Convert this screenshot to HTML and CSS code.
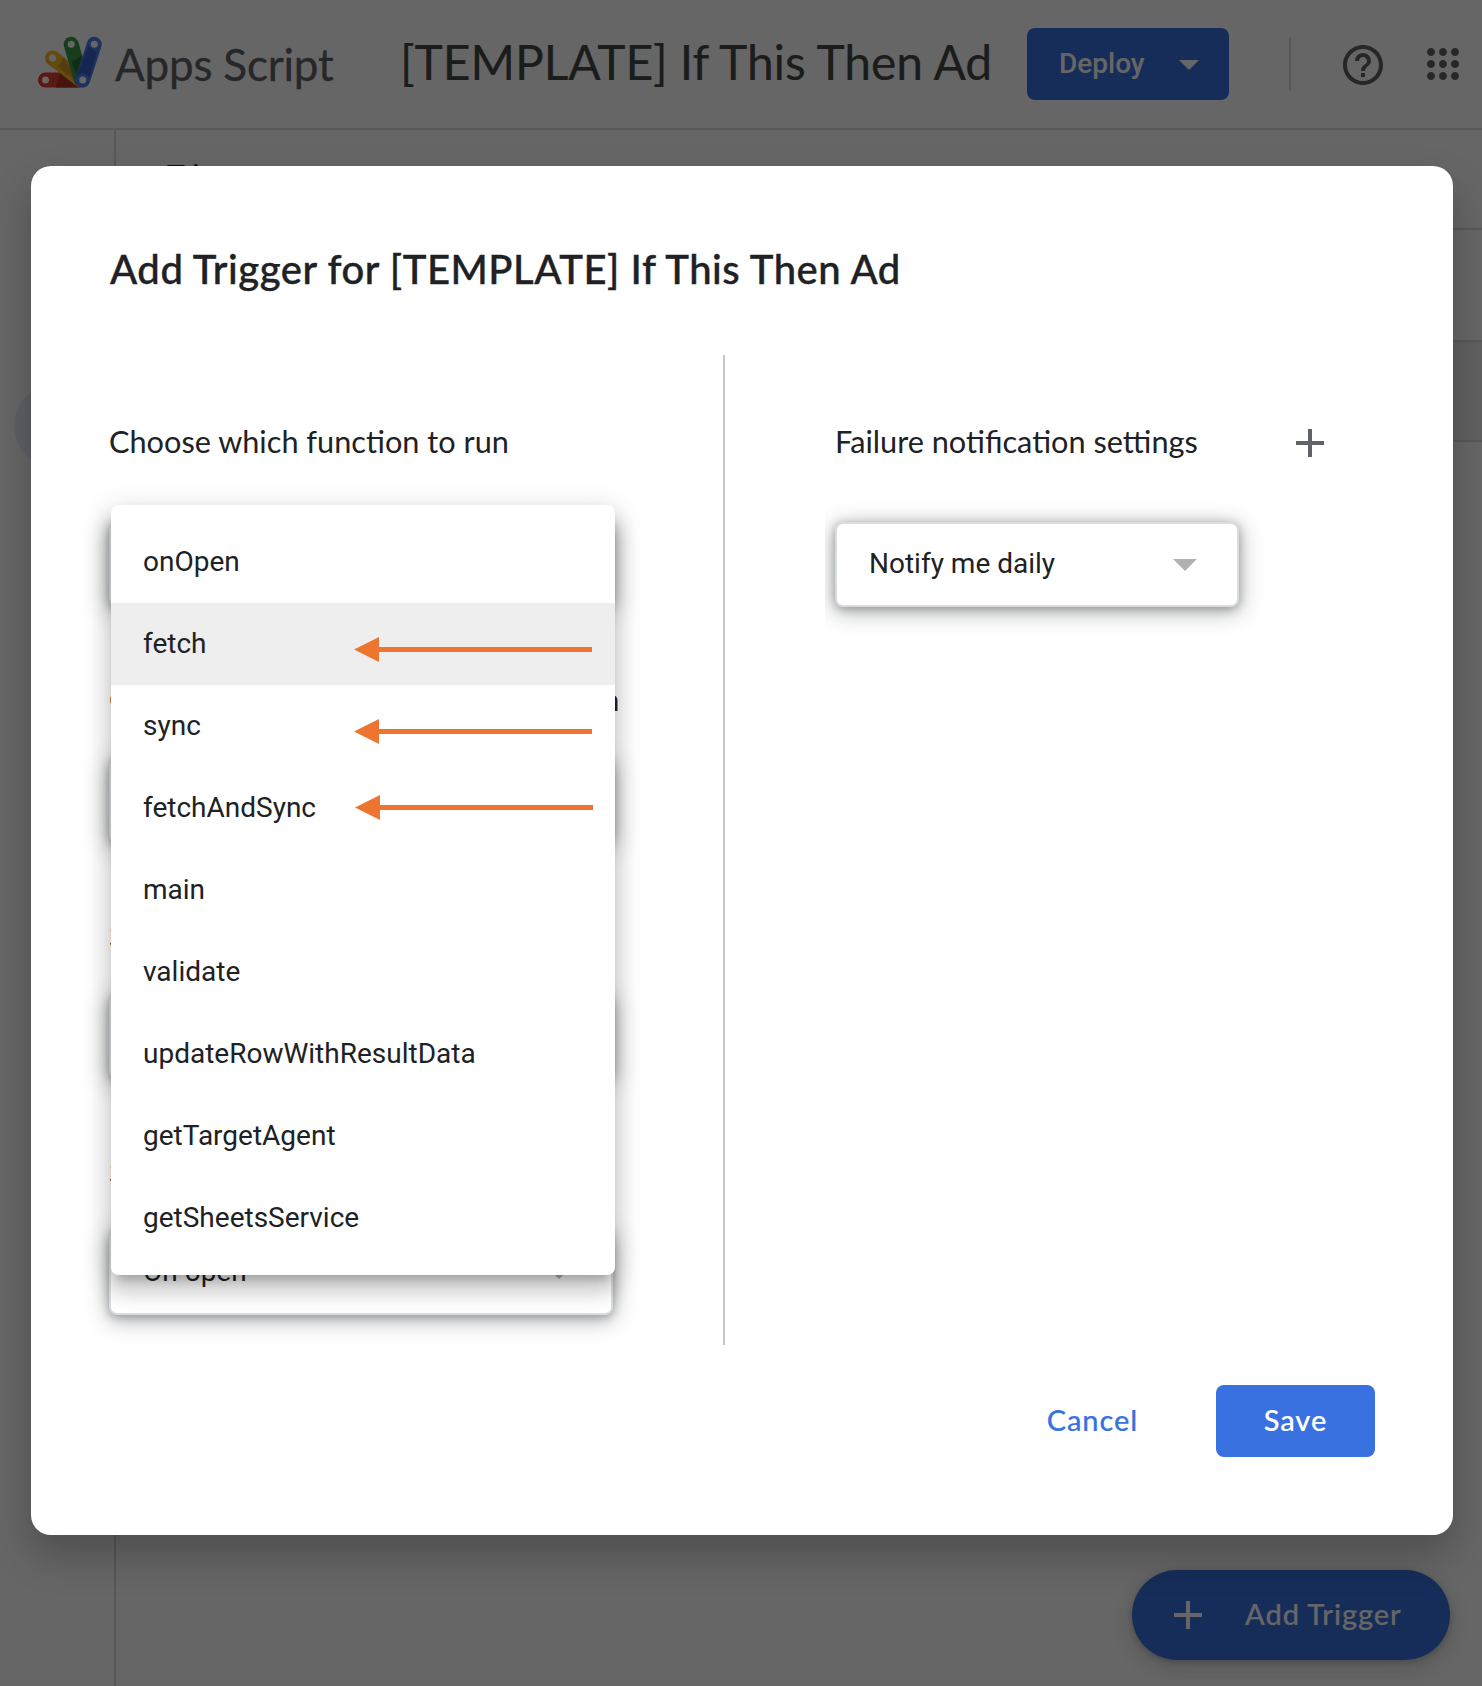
FILE: index.html
```html
<!DOCTYPE html>
<html lang="en">
<head>
<meta charset="utf-8">
<title>Apps Script - Add Trigger</title>
<link rel="stylesheet" href="styles.css">
</head>
<body>
<div class="app">
  <header class="topbar">
    <svg class="logo" width="64" height="52" viewBox="38 36 64 52">
      <path d="M45.500 80H80" stroke="#e0402f" class="blade"/>
      <path d="M60 72.500L80 87.500H56Z" fill="#b5301f"/>
      <path d="M52.500 58L80.500 79.500" stroke="#f5b82a" class="blade"/>
      <path d="M64 57.500L76 80L70 76.500L58 67Z" fill="#d99a1c"/>
      <path d="M71.200 44.300L81 79" stroke="#3c9a4c" class="blade"/>
      <path d="M82.500 55L76.500 76L72 62Z" fill="#2a7238"/>
      <path d="M94.300 44.300L82.700 80" stroke="#4a7fe8" class="blade"/>
      <path d="M88.500 46L75.800 78L82 72.500L89.500 77L97 53Z" fill="#3563c4"/>
      <g fill="#fff"><circle cx="45.500" cy="80" r="3.500"/><circle cx="52.500" cy="58" r="3.500"/><circle cx="71.200" cy="44.300" r="3.500"/><circle cx="94.300" cy="44.300" r="3.500"/><circle cx="82.700" cy="80" r="3.500"/></g>
    </svg>
    <span class="brand">Apps Script</span>
    <span class="project">[TEMPLATE] If This Then Ad</span>
    <button class="deploy">Deploy<svg width="20" height="10" viewBox="0 0 20 10"><path d="M0 0H20L10 10Z" fill="#fff"/></svg></button>
    <span class="rule"></span>
    <svg class="help" width="48" height="48" viewBox="0 0 24 24" fill="#5f6368"><path d="M11 18h2v-2h-2v2zm1-16C6.480 2 2 6.480 2 12s4.480 10 10 10 10-4.480 10-10S17.520 2 12 2zm0 18c-4.410 0-8-3.590-8-8s3.590-8 8-8 8 3.590 8 8-3.590 8-8 8zm0-14c-2.210 0-4 1.790-4 4h2c0-1.100.9-2 2-2s2 .9 2 2c0 2-3 1.750-3 5h2c0-2.250 3-2.500 3-5 0-2.210-1.790-4-4-4z"/></svg>
    <svg class="grid" width="48" height="48" viewBox="0 0 24 24" fill="#5f6368"><path d="M6 8c1.100 0 2-.9 2-2s-.9-2-2-2-2 .9-2 2 .9 2 2 2zm6 12c1.100 0 2-.9 2-2s-.9-2-2-2-2 .9-2 2 .9 2 2 2zm-6 0c1.100 0 2-.9 2-2s-.9-2-2-2-2 .9-2 2 .9 2 2 2zm0-6c1.100 0 2-.9 2-2s-.9-2-2-2-2 .9-2 2 .9 2 2 2zm6 0c1.100 0 2-.9 2-2s-.9-2-2-2-2 .9-2 2 .9 2 2 2zm4-8c0 1.100.9 2 2 2s2-.9 2-2-.9-2-2-2-2 .9-2 2zm-4 2c1.100 0 2-.9 2-2s-.9-2-2-2-2 .9-2 2 .9 2 2 2zm6 6c1.100 0 2-.9 2-2s-.9-2-2-2-2 .9-2 2 .9 2 2 2zm0 6c1.100 0 2-.9 2-2s-.9-2-2-2-2 .9-2 2 .9 2 2 2z"/></svg>
  </header>
  <div class="workspace">
    <nav class="rail"><span class="rail-active"></span></nav>
    <main class="content">
      <div class="content-title">Triggers</div>
      <div class="filter-row"></div>
      <div class="table-head"></div>
    </main>
  </div>
  <button class="fab">
    <svg width="28" height="28" viewBox="0 0 28 28"><path d="M14 0V28M0 14H28" stroke="#fff" stroke-width="4"/></svg>
    <span>Add Trigger</span>
  </button>
</div>

<div class="scrim">
  <section class="dialog">
    <h1 class="dialog-title">Add Trigger for [TEMPLATE] If This Then Ad</h1>
    <div class="columns">
      <div class="settings">
        <div class="field first">
          <div class="label">Choose which function to run</div>
          <div class="select"></div>
          <ul class="menu">
            <li>onOpen</li>
            <li class="active">fetch<svg class="arrow" width="238" height="25" viewBox="0 0 238 25"><path d="M0 12.500L25 0V10H238V15H25V25Z"/></svg></li>
            <li>sync<svg class="arrow" width="238" height="25" viewBox="0 0 238 25"><path d="M0 12.500L25 0V10H238V15H25V25Z"/></svg></li>
            <li>fetchAndSync<svg class="arrow arrow-mid" width="238" height="25" viewBox="0 0 238 25"><path d="M0 12.500L25 0V10H238V15H25V25Z"/></svg></li>
            <li>main</li>
            <li>validate</li>
            <li>updateRowWithResultData</li>
            <li>getTargetAgent</li>
            <li>getSheetsService</li>
          </ul>
        </div>
        <div class="field">
          <div class="label label-deployment">Choose which deployment should run</div>
          <div class="select"></div>
        </div>
        <div class="field">
          <div class="label">Select event source</div>
          <div class="select"></div>
        </div>
        <div class="field">
          <div class="label">Select event type</div>
          <div class="select">On open<svg width="24" height="12" viewBox="0 0 24 12"><path d="M0 0H24L12 12Z" fill="#b1b1b1"/></svg></div>
        </div>
      </div>
      <div class="notify">
        <div class="notify-head">
          <div class="label label-notify">Failure notification settings</div>
          <svg width="28" height="28" viewBox="0 0 28 28"><path d="M14 0V28M0 14H28" stroke="#5f6368" stroke-width="4"/></svg>
        </div>
        <div class="notify-body">
          <div class="select">Notify me daily<svg width="24" height="12" viewBox="0 0 24 12"><path d="M0 0H24L12 12Z" fill="#b1b1b1"/></svg></div>
        </div>
      </div>
    </div>
    <footer class="actions">
      <button class="cancel">Cancel</button>
      <button class="save">Save</button>
    </footer>
  </section>
</div>
</body>
</html>
```
FILE: styles.css
```css
* { box-sizing: border-box; }

body {
  margin: 0;
  height: 1686px;
  overflow: hidden;
  background: #fff;
  color: #202124;
  font-family: Lato, "Open Sans", sans-serif;
}

button {
  border: 0;
  padding: 0;
  font: inherit;
  letter-spacing: inherit;
  background: none;
}

svg { display: block; flex: none; }

/* Editor page */
.app {
  height: 1686px;
  display: flex;
  flex-direction: column;
}

.topbar {
  height: 130px;
  flex: none;
  display: flex;
  align-items: center;
  padding-left: 38px;
  border-bottom: 2px solid #dadce0;
  white-space: nowrap;
}

.logo { margin-bottom: 4px; }

.blade {
  stroke-width: 15;
  stroke-linecap: round;
}

.brand {
  width: 285px;
  margin-left: 13px;
  font-size: 44px;
  line-height: 56px;
  letter-spacing: -.2px;
  color: #5f6368;
  -webkit-text-stroke: .3px;
}

.project {
  width: 627px;
  padding-bottom: 5px;
  font-size: 48px;
  line-height: 60px;
  letter-spacing: -.1px;
  color: #444746;
  -webkit-text-stroke: .15px;
}

.deploy {
  width: 202px;
  height: 72px;
  display: flex;
  align-items: center;
  justify-content: space-between;
  padding: 0 30px 2px 32px;
  border-radius: 8px;
  background: #3971e0;
  color: #fff;
  font: 500 28px Roboto, sans-serif;
}

.deploy svg { margin-top: 3px; }

.rule {
  width: 2px;
  height: 54px;
  margin-left: 60px;
  background: #dadce0;
}

.help { margin: 2px 0 0 47.5px; }
.grid { margin-left: 32.5px; }

.workspace {
  flex: 1;
  display: flex;
}

.rail {
  width: 116px;
  padding: 254px 0 0 14px;
  border-right: 2px solid #dadce0;
}

.rail-active {
  display: block;
  width: 84px;
  height: 84px;
  border-radius: 42px;
  background: #e8f0fe;
}

.content { flex: 1; }

.content-title {
  height: 100px;
  padding: 25px 0 0 51px;
  border-bottom: 2px solid #dadce0;
  font-size: 30px;
  line-height: 40px;
}

.filter-row {
  height: 112px;
  border-bottom: 2px solid #dadce0;
}

.table-head {
  height: 100px;
  background: #f0f0f0;
  border-bottom: 2px solid #dadce0;
}

.fab {
  position: absolute;
  left: 1132px;
  top: 1570px;
  width: 318px;
  height: 90px;
  display: flex;
  align-items: center;
  gap: 43px;
  padding-left: 42px;
  border-radius: 45px;
  background: #3971e0;
  color: #fff;
  font-size: 29px;
  font-weight: 500;
  letter-spacing: .95px;
  -webkit-text-stroke: .15px;
  box-shadow: 0 2px 6px rgba(60, 64, 67, .3), 0 8px 20px 4px rgba(60, 64, 67, .15);
}

.fab span { padding-bottom: 4px; }

/* Modal */
.scrim {
  position: absolute;
  inset: 0;
  padding: 166px 29px 0 31px;
  background: rgba(0, 0, 0, .6);
}

.dialog {
  height: 1369px;
  padding-top: 79px;
  border-radius: 20px;
  background: #fff;
  box-shadow: 0 20px 40px rgba(0, 0, 0, .24);
}

.dialog-title {
  margin: 0 0 62px 79px;
  font-size: 40px;
  font-weight: 500;
  line-height: 48px;
  letter-spacing: .54px;
  -webkit-text-stroke: .4px;
  white-space: nowrap;
}

.columns {
  height: 990px;
  display: flex;
}

.settings {
  width: 694px;
  padding: 66px 0 0 78px;
  border-right: 2px solid #c4c7c5;
  display: flex;
  flex-direction: column;
  gap: 72px;
}

.field { position: relative; }

.label {
  height: 40px;
  margin: 0 0 39px;
  padding-top: 1px;
  font-size: 30.7px;
  line-height: 40px;
  white-space: nowrap;
}

.label-deployment { letter-spacing: .08px; }

.first .label { margin-bottom: 61px; }

.select {
  width: 504px;
  height: 85px;
  display: flex;
  align-items: center;
  justify-content: space-between;
  padding: 0 40px 3px 32px;
  border: 2px solid #dadce0;
  border-radius: 8px;
  background: #fff;
  font: 28px Roboto, sans-serif;
  box-shadow: 0 2px 8px rgba(60, 64, 67, .35), 0 4px 22px 1px rgba(60, 64, 67, .42);
}

.select svg { margin-top: 4px; }

.menu {
  position: absolute;
  z-index: 1;
  left: 2px;
  top: 84px;
  width: 504px;
  margin: 0;
  padding: 16px 0;
  list-style: none;
  border-radius: 8px;
  background: #fff;
  font: 28px Roboto, sans-serif;
  box-shadow: 0 10px 10px -6px rgba(0, 0, 0, .2), 0 16px 20px 2px rgba(0, 0, 0, .14), 0 6px 28px 4px rgba(0, 0, 0, .12);
}

.menu li {
  position: relative;
  height: 82px;
  padding: 0 0 1px 32px;
  display: flex;
  align-items: center;
}

.menu .active { background: #eee; }

.arrow {
  position: absolute;
  left: 243px;
  top: 34px;
  fill: #ed7530;
}

.arrow-mid {
  left: 244px;
  top: 28px;
}

.notify { padding-top: 66px; }

.notify-head {
  display: flex;
  padding-left: 110px;
}

.label-notify { width: 461px; margin-bottom: 0; }
.notify-head svg { margin-top: 8px; }

/* The panel edge trims the select's left shadow */
.notify-body {
  margin-left: 100px;
  width: 500px;
  padding: 61px 10px 60px;
  overflow: hidden;
}

.notify-body .select { width: 404px; }

.actions {
  display: flex;
  justify-content: flex-end;
  padding: 40px 78px 0 0;
  font-size: 29px;
  font-weight: 500;
  letter-spacing: .9px;
  -webkit-text-stroke: .15px;
}

.cancel {
  padding-bottom: 4px;
  margin-right: 78px;
  color: #3971e0;
}

.save {
  width: 159px;
  height: 72px;
  padding-bottom: 4px;
  border-radius: 8px;
  background: #3971e0;
  color: #fff;
}
```
